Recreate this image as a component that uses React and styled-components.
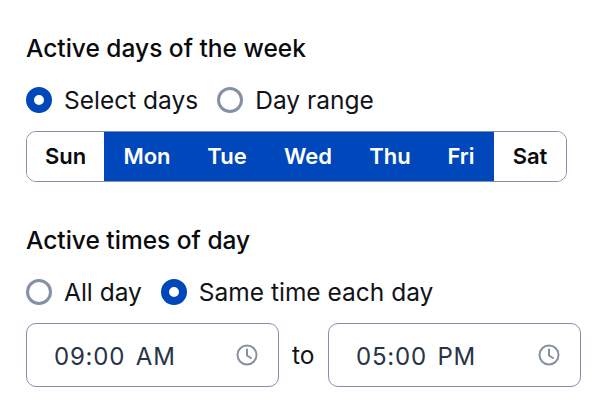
import React from "react";
import styled, { createGlobalStyle } from "styled-components";

const Global = createGlobalStyle`
  html, body { margin: 0; padding: 0; background: #fff; }
  body { font-family: Inter, "Liberation Sans", sans-serif; color: #0b0c0f; }
`;

const Page = styled.div`
  width: 600px;
  height: 412px;
  box-sizing: border-box;
  padding: 34px 19px 0 26px;
  overflow: hidden;
`;

const Section = styled.section`
  display: flex;
  flex-direction: column;
  align-items: flex-start;
  margin-bottom: ${(p) => p.$gap || 0}px;
`;

const Heading = styled.h2`
  margin: 0 0 24px;
  font-size: 24.5px;
  line-height: 29px;
  font-weight: 500;
  color: #0a0b0d;
`;

const RadioRow = styled.div`
  display: flex;
  align-items: center;
  gap: 19px;
  height: 26px;
  margin-bottom: 18px;
`;

const RadioLabel = styled.label`
  display: flex;
  align-items: center;
  gap: 12px;
  font-size: 24.5px;
  line-height: 26px;
  color: #111318;
`;

const RadioMark = styled.span`
  width: 26px;
  height: 26px;
  box-sizing: border-box;
  border-radius: 50%;
  background: #fff;
  border: ${(p) => (p.$on ? "8px solid #0047bb" : "3px solid #8490a6")};
`;

const Days = styled.div`
  display: flex;
  width: 541px;
  height: 51px;
  box-sizing: border-box;
  border: 1px solid #8490ab;
  border-radius: 10px;
  overflow: hidden;
`;

const Day = styled.div`
  flex: 0 0 ${(p) => p.$w}px;
  display: flex;
  align-items: center;
  justify-content: center;
  padding-bottom: 1px;
  box-sizing: border-box;
  font-size: 22px;
  font-weight: 600;
  background: ${(p) => (p.$on ? "#0047bb" : "#fff")};
  color: ${(p) => (p.$on ? "#fff" : "#0a0b0d")};
`;

const TimeRow = styled.div`
  display: flex;
  align-items: center;
  gap: 13px;
`;

const TimeBox = styled.div`
  width: 253px;
  height: 64px;
  box-sizing: border-box;
  border: 1px solid #8490ab;
  border-radius: 10px;
  padding: 0 20px 0 27px;
  display: flex;
  align-items: center;
  justify-content: space-between;
  background: #fff;
`;

const TimeValue = styled.span`
  padding-top: 2px;
  font-size: 24px;
  color: #283347;
  word-spacing: 3px;
  letter-spacing: 0.8px;
`;

const To = styled.span`
  width: 23px;
  font-size: 24.5px;
  color: #111318;
`;

const Clock = () => (
  <svg width="22" height="22" viewBox="0 0 22 22" fill="none" stroke="#8490a6" strokeWidth="2" strokeLinecap="round">
    <circle cx="11" cy="11" r="9.5" />
    <path d="M11 5.5V11.5L15 14" />
  </svg>
);

const days = [
  ["Sun", 77, false],
  ["Mon", 86, true],
  ["Tue", 74, true],
  ["Wed", 88, true],
  ["Thu", 76, true],
  ["Fri", 66, true],
  ["Sat", 72, false],
];

export default function App() {
  return (
    <Page>
      <Global />
      <Section $gap={44}>
        <Heading>Active days of the week</Heading>
        <RadioRow>
          <RadioLabel><RadioMark $on />Select days</RadioLabel>
          <RadioLabel><RadioMark />Day range</RadioLabel>
        </RadioRow>
        <Days>
          {days.map(([d, w, on]) => (
            <Day key={d} $w={w} $on={on}>{d}</Day>
          ))}
        </Days>
      </Section>
      <Section>
        <Heading>Active times of day</Heading>
        <RadioRow>
          <RadioLabel><RadioMark />All day</RadioLabel>
          <RadioLabel><RadioMark $on />Same time each day</RadioLabel>
        </RadioRow>
        <TimeRow>
          <TimeBox><TimeValue>09:00 AM</TimeValue><Clock /></TimeBox>
          <To>to</To>
          <TimeBox><TimeValue>05:00 PM</TimeValue><Clock /></TimeBox>
        </TimeRow>
      </Section>
    </Page>
  );
}
